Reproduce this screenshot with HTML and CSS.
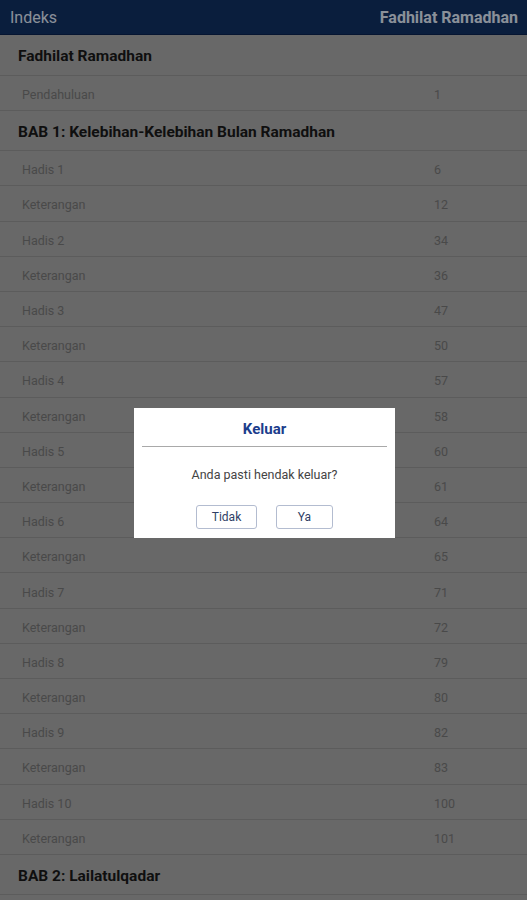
FILE: index.html
```html
<!DOCTYPE html>
<html lang="id">
<head>
    <meta charset="UTF-8">
    <meta name="viewport" content="width=device-width, initial-scale=1.0">
    <title>Fadhilat Ramadhan</title>
    <link rel="stylesheet" href="styles.css">
</head>
<body>
    <header class="topbar">
        <span class="topbar-left">Indeks</span>
        <span class="topbar-title">Fadhilat Ramadhan</span>
    </header>

    <div class="index-list">
        <div class="section-row">Fadhilat Ramadhan</div>
        <div class="item-row"><span class="item-name">Pendahuluan</span><span class="item-page">1</span></div>

        <div class="section-row">BAB 1: Kelebihan-Kelebihan Bulan Ramadhan</div>
        <div class="item-row"><span class="item-name">Hadis 1</span><span class="item-page">6</span></div>
        <div class="item-row"><span class="item-name">Keterangan</span><span class="item-page">12</span></div>
        <div class="item-row"><span class="item-name">Hadis 2</span><span class="item-page">34</span></div>
        <div class="item-row"><span class="item-name">Keterangan</span><span class="item-page">36</span></div>
        <div class="item-row"><span class="item-name">Hadis 3</span><span class="item-page">47</span></div>
        <div class="item-row"><span class="item-name">Keterangan</span><span class="item-page">50</span></div>
        <div class="item-row"><span class="item-name">Hadis 4</span><span class="item-page">57</span></div>
        <div class="item-row"><span class="item-name">Keterangan</span><span class="item-page">58</span></div>
        <div class="item-row"><span class="item-name">Hadis 5</span><span class="item-page">60</span></div>
        <div class="item-row"><span class="item-name">Keterangan</span><span class="item-page">61</span></div>
        <div class="item-row"><span class="item-name">Hadis 6</span><span class="item-page">64</span></div>
        <div class="item-row"><span class="item-name">Keterangan</span><span class="item-page">65</span></div>
        <div class="item-row"><span class="item-name">Hadis 7</span><span class="item-page">71</span></div>
        <div class="item-row"><span class="item-name">Keterangan</span><span class="item-page">72</span></div>
        <div class="item-row"><span class="item-name">Hadis 8</span><span class="item-page">79</span></div>
        <div class="item-row"><span class="item-name">Keterangan</span><span class="item-page">80</span></div>
        <div class="item-row"><span class="item-name">Hadis 9</span><span class="item-page">82</span></div>
        <div class="item-row"><span class="item-name">Keterangan</span><span class="item-page">83</span></div>
        <div class="item-row"><span class="item-name">Hadis 10</span><span class="item-page">100</span></div>
        <div class="item-row"><span class="item-name">Keterangan</span><span class="item-page">101</span></div>

        <div class="section-row">BAB 2: Lailatulqadar</div>
    </div>

    <div class="dim">
        <div class="dialog">
            <div class="dialog-title">Keluar</div>
            <div class="dialog-msg">Anda pasti hendak keluar?</div>
            <div class="dialog-actions">
                <button class="dialog-btn">Tidak</button>
                <button class="dialog-btn">Ya</button>
            </div>
        </div>
    </div>
</body>
</html>
```

FILE: styles.css
```css
* {
    margin: 0;
    padding: 0;
    box-sizing: border-box;
}

html, body {
    height: 100%;
    overflow: hidden;
}

body {
    font-family: Roboto, 'Liberation Sans', sans-serif;
    background: #adadad;
    color: #1c1c1c;
}

.topbar {
    height: 35px;
    background: #113267;
    border-bottom: 1px solid #0b2452;
    display: flex;
    align-items: center;
    justify-content: space-between;
    padding: 0 9px 0 10px;
    color: #e6f0ff;
    font-size: 16px;
}

.topbar-title {
    font-weight: bold;
    font-size: 16px;
}

.section-row {
    height: 40.5px;
    display: flex;
    align-items: center;
    padding: 3px 0 0 18px;
    font-size: 15.5px;
    font-weight: bold;
    color: #1a1a1a;
    border-bottom: 1px solid #999;
}

.item-row {
    height: 35.2px;
    display: flex;
    align-items: center;
    padding: 3px 0 0 22px;
    font-size: 12.5px;
    color: #7b7b7b;
    border-bottom: 1px solid #999;
}

.item-name {
    width: 412px;
}

/* modal */
.dim {
    position: fixed;
    top: 0;
    left: 0;
    right: 0;
    bottom: 0;
    background: rgba(0, 0, 0, 0.4);
}

.dialog {
    position: absolute;
    left: 134px;
    top: 408px;
    width: 261px;
    height: 130px;
    background: #fff;
    padding: 0 8px;
}

.dialog-title {
    height: 39px;
    display: flex;
    align-items: center;
    justify-content: center;
    padding-top: 3px;
    font-size: 15px;
    font-weight: bold;
    color: #1c3d8c;
    border-bottom: 1px solid #a9a9a9;
}

.dialog-msg {
    text-align: center;
    font-size: 12.5px;
    color: #444;
    margin-top: 20px;
}

.dialog-actions {
    display: flex;
    justify-content: center;
    gap: 19px;
    margin-top: 23px;
}

.dialog-btn {
    width: 61px;
    height: 24px;
    background: #fff;
    border: 1px solid #b3bcd0;
    border-radius: 3px;
    font-family: inherit;
    font-size: 12px;
    color: #2f3f66;
}

.dialog-btn + .dialog-btn {
    width: 57px;
}
```
